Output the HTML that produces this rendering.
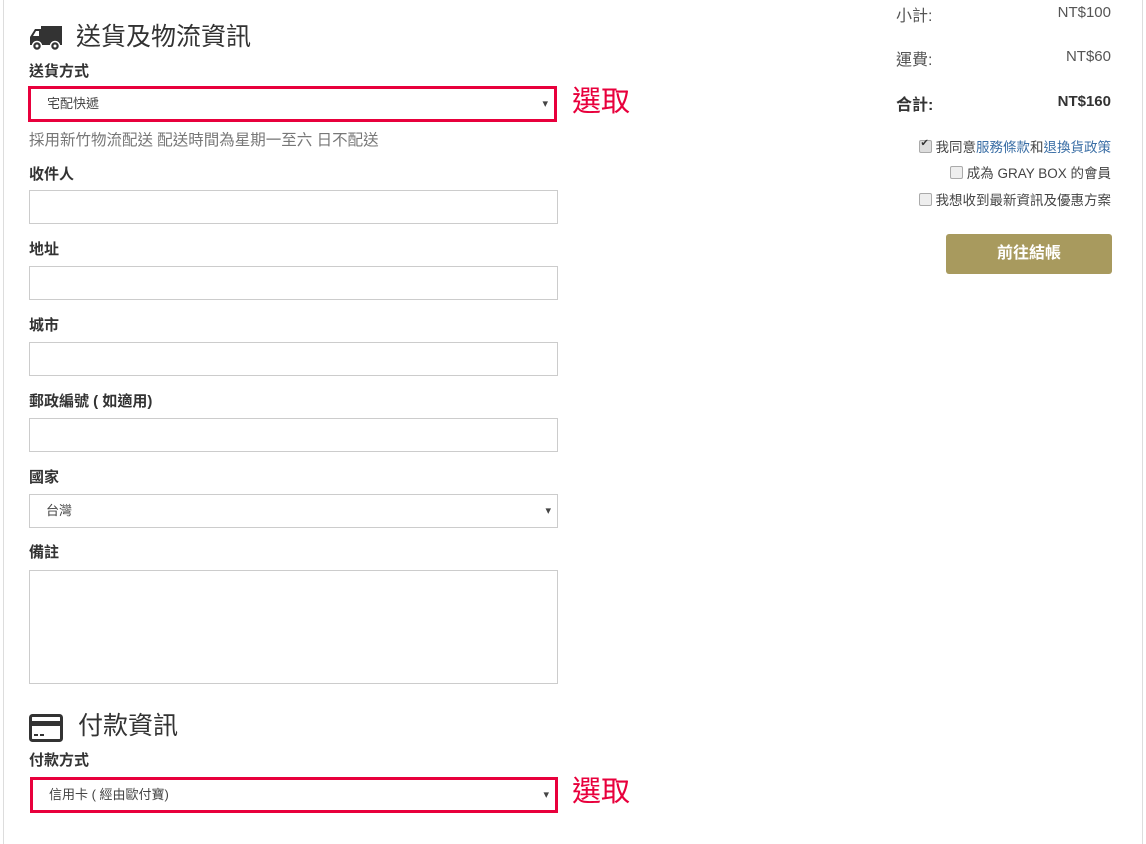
<!DOCTYPE html>
<html><head><meta charset="utf-8"><style>
body{margin:0;width:1146px;height:844px;background:#fff;position:relative;overflow:hidden;font-family:"Liberation Sans","Noto Sans CJK TC",sans-serif;color:#333}
.a{position:absolute}
.lbl{position:absolute;left:29px;font-size:15px;font-weight:bold;color:#333;line-height:18px}
.in{position:absolute;left:29px;width:529px;height:32px;border:1px solid #ccc;box-sizing:border-box;background:#fff}
.sel{font-size:13px;color:#444;line-height:30px;padding-left:16px}
.sel:after{content:"▾";position:absolute;right:6px;top:0;font-size:11px;color:#444}
.red{border:3px solid #e8003c}
.pick{position:absolute;left:572px;font-size:29px;color:#e8003c;line-height:32px}
.r{position:absolute;right:35px;text-align:right;font-size:15px;color:#555}
.c{position:absolute;right:35px;text-align:right;font-size:13.5px;color:#444}
.cb{display:inline-block;width:11px;height:11px;border:1px solid #aaa;border-radius:2px;background:#eee;vertical-align:-1px;margin-right:4px;position:relative}
</style></head><body>
<div class="a" style="left:3px;top:0;width:1px;height:844px;background:#ddd"></div>
<div class="a" style="left:1142px;top:0;width:1px;height:844px;background:#ddd"></div>

<svg class="a" style="left:29px;top:24px" width="34" height="28" viewBox="0 0 34 28"><path d="M12 2h21v19H12z M1 13l5-8h6v16H1z" fill="#333"/><path d="M4 12l3-5h3v5z" fill="#fff"/><circle cx="8" cy="22" r="4.5" fill="#333" stroke="#fff" stroke-width="1.5"/><circle cx="26" cy="22" r="4.5" fill="#333" stroke="#fff" stroke-width="1.5"/><circle cx="8" cy="22" r="1.5" fill="#fff"/><circle cx="26" cy="22" r="1.5" fill="#fff"/></svg>
<div class="a" style="left:76px;top:21px;font-size:25px;color:#333;line-height:32px">送貨及物流資訊</div>
<div class="lbl" style="top:63px">送貨方式</div>
<div class="in sel red" style="left:28px;top:86px;width:529px;height:36px;line-height:30px">宅配快遞</div>
<div class="pick" style="top:86px">選取</div>
<div class="a" style="left:29px;top:128px;font-size:15.5px;color:#777">採用新竹物流配送 配送時間為星期一至六 日不配送</div>

<div class="lbl" style="top:166px">收件人</div><div class="in" style="top:190px;height:34px"></div>
<div class="lbl" style="top:241px">地址</div><div class="in" style="top:266px;height:34px"></div>
<div class="lbl" style="top:317px">城市</div><div class="in" style="top:342px;height:34px"></div>
<div class="lbl" style="top:393px">郵政編號 ( 如適用)</div><div class="in" style="top:418px;height:34px"></div>
<div class="lbl" style="top:469px">國家</div><div class="in sel" style="top:494px;height:34px;line-height:32px">台灣</div>
<div class="lbl" style="top:544px">備註</div><div class="in" style="top:570px;height:114px"></div>

<svg class="a" style="left:29px;top:714px" width="34" height="28" viewBox="0 0 34 28"><rect x="1.5" y="1.5" width="31" height="25" rx="2" fill="none" stroke="#333" stroke-width="3"/><rect x="2" y="7" width="30" height="5" fill="#333"/><rect x="5" y="20" width="4" height="2" fill="#333"/><rect x="11" y="20" width="4" height="2" fill="#333"/></svg>
<div class="a" style="left:78px;top:710px;font-size:25px;color:#333;line-height:32px">付款資訊</div>
<div class="lbl" style="top:752px">付款方式</div>
<div class="in sel red" style="left:30px;top:777px;width:528px;height:36px">信用卡 ( 經由歐付寶)</div>
<div class="pick" style="top:776px">選取</div>

<div class="a" style="left:896px;top:2px;font-size:16px;color:#555">小計:</div><div class="r" style="top:4px">NT$100</div>
<div class="a" style="left:896px;top:46px;font-size:16px;color:#555">運費:</div><div class="r" style="top:48px">NT$60</div>
<div class="a" style="left:896px;top:91px;font-size:16px;font-weight:bold;color:#333">合計:</div><div class="r" style="top:93px;font-weight:bold;color:#333">NT$160</div>
<div class="c" style="top:136px"><span class="cb" style="background:#ddd"><span style="position:absolute;left:1px;top:-3px;font-size:10px;color:#333">✔</span></span>我同意<span style="color:#3a6ea5">服務條款</span>和<span style="color:#3a6ea5">退換貨政策</span></div>
<div class="c" style="top:162px"><span class="cb"></span>成為 GRAY BOX 的會員</div>
<div class="c" style="top:189px"><span class="cb"></span>我想收到最新資訊及優惠方案</div>
<div class="a" style="left:946px;top:234px;width:166px;height:40px;background:#a89a5e;border-radius:3px;color:#fff;font-weight:bold;font-size:16px;text-align:center;line-height:40px">前往結帳</div>
</body></html>
